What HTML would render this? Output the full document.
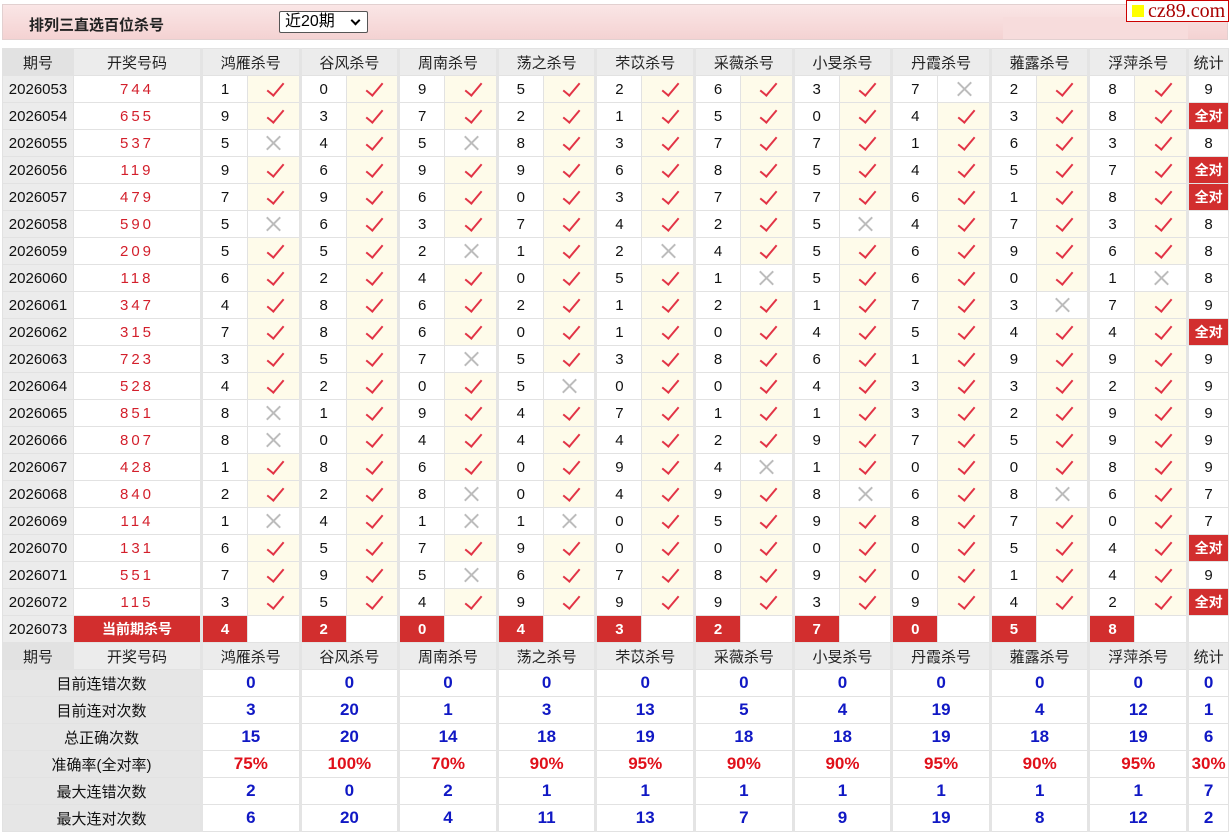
<!DOCTYPE html>
<html><head><meta charset="utf-8">
<style>
*{margin:0;padding:0;box-sizing:border-box}
body{width:1230px;height:832px;background:#fff;font-family:"Liberation Sans","Noto Sans CJK SC",sans-serif;position:relative;overflow:hidden}
.top{position:absolute;left:2px;top:4px;width:1226px;height:36px;background:linear-gradient(#fae6e6,#f4d2d2);border:1px solid #e2d0d0}
.title{position:absolute;left:26px;top:9px;font-size:15px;font-weight:bold;color:#222}
.sel{position:absolute;left:276px;top:6px;width:89px;height:22px;border:1px solid #555;border-radius:2px;background:#fff;font-size:16px;padding-left:5px;line-height:20px}
.sel i{position:absolute;right:8px;top:5px;width:7px;height:7px;border-right:2px solid #000;border-bottom:2px solid #000;transform:rotate(45deg)}
.inner{position:absolute;left:1000px;top:12px;width:185px;height:22px;background:#f7dcdc}
.logo{position:absolute;left:1126px;top:0;width:103px;height:22px;background:#fff;border:1px solid #c00;font-family:"Liberation Serif",serif;font-size:20px;color:#a00;line-height:20px;padding-left:21px}
.logo b{position:absolute;left:5px;top:4px;width:12px;height:12px;background:#ff0}
table{position:absolute;left:2px;top:48px;border-collapse:collapse;table-layout:fixed;width:1226px}
td{height:27px;border:1px solid #e2e2e2;text-align:center;font-size:15px;color:#111;padding:0;position:relative}
tr.h td{background:#ececec;color:#222}
tr.h td.q{background:#e2e2e2}
td.q{background:#ececec}
td.k{color:#d31f2b;letter-spacing:3px}
td.g{border-right:3px solid #e4e4e4}
td.y{background:#fefbea}
td.y:after{content:"";position:absolute;left:50%;top:50%;width:7px;height:15px;margin:-10px 0 0 -2px;border-right:2px solid #e23446;border-bottom:2px solid #e23446;transform:rotate(40deg)}
td.x:before,td.x:after{content:"";position:absolute;left:50%;top:50%;width:19px;height:2px;margin:-1px 0 0 -9px;background:#bcbcbc;transform:rotate(45deg)}
td.x:after{transform:rotate(-45deg)}
td.a{background:#d22e2e;color:#fff;font-weight:bold;font-size:14px}
td.c{background:#d22e2e;color:#fff;font-weight:bold;font-size:15px}
td.l{background:#e6e6e6}
td.b{color:#1018c4;font-weight:bold;font-size:17px}
td.r{color:#e0101a;font-weight:bold;font-size:17px}
</style></head><body>
<div class="top"><div class="title">排列三直选百位杀号</div><div class="sel">近20期<i></i></div><div class="inner"></div></div>
<div class="logo"><b></b>cz89.com</div>
<table>
<colgroup><col style="width:71px"><col style="width:128px"><col style="width:46px"><col style="width:52.6px"><col style="width:46px"><col style="width:52.6px"><col style="width:46px"><col style="width:52.6px"><col style="width:46px"><col style="width:52.6px"><col style="width:46px"><col style="width:52.6px"><col style="width:46px"><col style="width:52.6px"><col style="width:46px"><col style="width:52.6px"><col style="width:46px"><col style="width:52.6px"><col style="width:46px"><col style="width:52.6px"><col style="width:46px"><col style="width:52.6px"><col style="width:41px"></colgroup>
<tr class="h"><td class="q">期号</td><td class="g">开奖号码</td><td colspan="2" class="g">鸿雁杀号</td><td colspan="2" class="g">谷风杀号</td><td colspan="2" class="g">周南杀号</td><td colspan="2" class="g">荡之杀号</td><td colspan="2" class="g">芣苡杀号</td><td colspan="2" class="g">采薇杀号</td><td colspan="2" class="g">小旻杀号</td><td colspan="2" class="g">丹霞杀号</td><td colspan="2" class="g">蕥露杀号</td><td colspan="2" class="g">浮萍杀号</td><td>统计</td></tr>
<tr><td class="q">2026053</td><td class="k g">744</td><td>1</td><td class="y g"></td><td>0</td><td class="y g"></td><td>9</td><td class="y g"></td><td>5</td><td class="y g"></td><td>2</td><td class="y g"></td><td>6</td><td class="y g"></td><td>3</td><td class="y g"></td><td>7</td><td class="x g"></td><td>2</td><td class="y g"></td><td>8</td><td class="y g"></td><td>9</td></tr>
<tr><td class="q">2026054</td><td class="k g">655</td><td>9</td><td class="y g"></td><td>3</td><td class="y g"></td><td>7</td><td class="y g"></td><td>2</td><td class="y g"></td><td>1</td><td class="y g"></td><td>5</td><td class="y g"></td><td>0</td><td class="y g"></td><td>4</td><td class="y g"></td><td>3</td><td class="y g"></td><td>8</td><td class="y g"></td><td class="a">全对</td></tr>
<tr><td class="q">2026055</td><td class="k g">537</td><td>5</td><td class="x g"></td><td>4</td><td class="y g"></td><td>5</td><td class="x g"></td><td>8</td><td class="y g"></td><td>3</td><td class="y g"></td><td>7</td><td class="y g"></td><td>7</td><td class="y g"></td><td>1</td><td class="y g"></td><td>6</td><td class="y g"></td><td>3</td><td class="y g"></td><td>8</td></tr>
<tr><td class="q">2026056</td><td class="k g">119</td><td>9</td><td class="y g"></td><td>6</td><td class="y g"></td><td>9</td><td class="y g"></td><td>9</td><td class="y g"></td><td>6</td><td class="y g"></td><td>8</td><td class="y g"></td><td>5</td><td class="y g"></td><td>4</td><td class="y g"></td><td>5</td><td class="y g"></td><td>7</td><td class="y g"></td><td class="a">全对</td></tr>
<tr><td class="q">2026057</td><td class="k g">479</td><td>7</td><td class="y g"></td><td>9</td><td class="y g"></td><td>6</td><td class="y g"></td><td>0</td><td class="y g"></td><td>3</td><td class="y g"></td><td>7</td><td class="y g"></td><td>7</td><td class="y g"></td><td>6</td><td class="y g"></td><td>1</td><td class="y g"></td><td>8</td><td class="y g"></td><td class="a">全对</td></tr>
<tr><td class="q">2026058</td><td class="k g">590</td><td>5</td><td class="x g"></td><td>6</td><td class="y g"></td><td>3</td><td class="y g"></td><td>7</td><td class="y g"></td><td>4</td><td class="y g"></td><td>2</td><td class="y g"></td><td>5</td><td class="x g"></td><td>4</td><td class="y g"></td><td>7</td><td class="y g"></td><td>3</td><td class="y g"></td><td>8</td></tr>
<tr><td class="q">2026059</td><td class="k g">209</td><td>5</td><td class="y g"></td><td>5</td><td class="y g"></td><td>2</td><td class="x g"></td><td>1</td><td class="y g"></td><td>2</td><td class="x g"></td><td>4</td><td class="y g"></td><td>5</td><td class="y g"></td><td>6</td><td class="y g"></td><td>9</td><td class="y g"></td><td>6</td><td class="y g"></td><td>8</td></tr>
<tr><td class="q">2026060</td><td class="k g">118</td><td>6</td><td class="y g"></td><td>2</td><td class="y g"></td><td>4</td><td class="y g"></td><td>0</td><td class="y g"></td><td>5</td><td class="y g"></td><td>1</td><td class="x g"></td><td>5</td><td class="y g"></td><td>6</td><td class="y g"></td><td>0</td><td class="y g"></td><td>1</td><td class="x g"></td><td>8</td></tr>
<tr><td class="q">2026061</td><td class="k g">347</td><td>4</td><td class="y g"></td><td>8</td><td class="y g"></td><td>6</td><td class="y g"></td><td>2</td><td class="y g"></td><td>1</td><td class="y g"></td><td>2</td><td class="y g"></td><td>1</td><td class="y g"></td><td>7</td><td class="y g"></td><td>3</td><td class="x g"></td><td>7</td><td class="y g"></td><td>9</td></tr>
<tr><td class="q">2026062</td><td class="k g">315</td><td>7</td><td class="y g"></td><td>8</td><td class="y g"></td><td>6</td><td class="y g"></td><td>0</td><td class="y g"></td><td>1</td><td class="y g"></td><td>0</td><td class="y g"></td><td>4</td><td class="y g"></td><td>5</td><td class="y g"></td><td>4</td><td class="y g"></td><td>4</td><td class="y g"></td><td class="a">全对</td></tr>
<tr><td class="q">2026063</td><td class="k g">723</td><td>3</td><td class="y g"></td><td>5</td><td class="y g"></td><td>7</td><td class="x g"></td><td>5</td><td class="y g"></td><td>3</td><td class="y g"></td><td>8</td><td class="y g"></td><td>6</td><td class="y g"></td><td>1</td><td class="y g"></td><td>9</td><td class="y g"></td><td>9</td><td class="y g"></td><td>9</td></tr>
<tr><td class="q">2026064</td><td class="k g">528</td><td>4</td><td class="y g"></td><td>2</td><td class="y g"></td><td>0</td><td class="y g"></td><td>5</td><td class="x g"></td><td>0</td><td class="y g"></td><td>0</td><td class="y g"></td><td>4</td><td class="y g"></td><td>3</td><td class="y g"></td><td>3</td><td class="y g"></td><td>2</td><td class="y g"></td><td>9</td></tr>
<tr><td class="q">2026065</td><td class="k g">851</td><td>8</td><td class="x g"></td><td>1</td><td class="y g"></td><td>9</td><td class="y g"></td><td>4</td><td class="y g"></td><td>7</td><td class="y g"></td><td>1</td><td class="y g"></td><td>1</td><td class="y g"></td><td>3</td><td class="y g"></td><td>2</td><td class="y g"></td><td>9</td><td class="y g"></td><td>9</td></tr>
<tr><td class="q">2026066</td><td class="k g">807</td><td>8</td><td class="x g"></td><td>0</td><td class="y g"></td><td>4</td><td class="y g"></td><td>4</td><td class="y g"></td><td>4</td><td class="y g"></td><td>2</td><td class="y g"></td><td>9</td><td class="y g"></td><td>7</td><td class="y g"></td><td>5</td><td class="y g"></td><td>9</td><td class="y g"></td><td>9</td></tr>
<tr><td class="q">2026067</td><td class="k g">428</td><td>1</td><td class="y g"></td><td>8</td><td class="y g"></td><td>6</td><td class="y g"></td><td>0</td><td class="y g"></td><td>9</td><td class="y g"></td><td>4</td><td class="x g"></td><td>1</td><td class="y g"></td><td>0</td><td class="y g"></td><td>0</td><td class="y g"></td><td>8</td><td class="y g"></td><td>9</td></tr>
<tr><td class="q">2026068</td><td class="k g">840</td><td>2</td><td class="y g"></td><td>2</td><td class="y g"></td><td>8</td><td class="x g"></td><td>0</td><td class="y g"></td><td>4</td><td class="y g"></td><td>9</td><td class="y g"></td><td>8</td><td class="x g"></td><td>6</td><td class="y g"></td><td>8</td><td class="x g"></td><td>6</td><td class="y g"></td><td>7</td></tr>
<tr><td class="q">2026069</td><td class="k g">114</td><td>1</td><td class="x g"></td><td>4</td><td class="y g"></td><td>1</td><td class="x g"></td><td>1</td><td class="x g"></td><td>0</td><td class="y g"></td><td>5</td><td class="y g"></td><td>9</td><td class="y g"></td><td>8</td><td class="y g"></td><td>7</td><td class="y g"></td><td>0</td><td class="y g"></td><td>7</td></tr>
<tr><td class="q">2026070</td><td class="k g">131</td><td>6</td><td class="y g"></td><td>5</td><td class="y g"></td><td>7</td><td class="y g"></td><td>9</td><td class="y g"></td><td>0</td><td class="y g"></td><td>0</td><td class="y g"></td><td>0</td><td class="y g"></td><td>0</td><td class="y g"></td><td>5</td><td class="y g"></td><td>4</td><td class="y g"></td><td class="a">全对</td></tr>
<tr><td class="q">2026071</td><td class="k g">551</td><td>7</td><td class="y g"></td><td>9</td><td class="y g"></td><td>5</td><td class="x g"></td><td>6</td><td class="y g"></td><td>7</td><td class="y g"></td><td>8</td><td class="y g"></td><td>9</td><td class="y g"></td><td>0</td><td class="y g"></td><td>1</td><td class="y g"></td><td>4</td><td class="y g"></td><td>9</td></tr>
<tr><td class="q">2026072</td><td class="k g">115</td><td>3</td><td class="y g"></td><td>5</td><td class="y g"></td><td>4</td><td class="y g"></td><td>9</td><td class="y g"></td><td>9</td><td class="y g"></td><td>9</td><td class="y g"></td><td>3</td><td class="y g"></td><td>9</td><td class="y g"></td><td>4</td><td class="y g"></td><td>2</td><td class="y g"></td><td class="a">全对</td></tr>
<tr><td class="q">2026073</td><td class="a g">当前期杀号</td><td class="c">4</td><td class="g"></td><td class="c">2</td><td class="g"></td><td class="c">0</td><td class="g"></td><td class="c">4</td><td class="g"></td><td class="c">3</td><td class="g"></td><td class="c">2</td><td class="g"></td><td class="c">7</td><td class="g"></td><td class="c">0</td><td class="g"></td><td class="c">5</td><td class="g"></td><td class="c">8</td><td class="g"></td><td></td></tr>
<tr class="h"><td class="q">期号</td><td class="g">开奖号码</td><td colspan="2" class="g">鸿雁杀号</td><td colspan="2" class="g">谷风杀号</td><td colspan="2" class="g">周南杀号</td><td colspan="2" class="g">荡之杀号</td><td colspan="2" class="g">芣苡杀号</td><td colspan="2" class="g">采薇杀号</td><td colspan="2" class="g">小旻杀号</td><td colspan="2" class="g">丹霞杀号</td><td colspan="2" class="g">蕥露杀号</td><td colspan="2" class="g">浮萍杀号</td><td>统计</td></tr>
<tr><td colspan="2" class="l g">目前连错次数</td><td colspan="2" class="b g">0</td><td colspan="2" class="b g">0</td><td colspan="2" class="b g">0</td><td colspan="2" class="b g">0</td><td colspan="2" class="b g">0</td><td colspan="2" class="b g">0</td><td colspan="2" class="b g">0</td><td colspan="2" class="b g">0</td><td colspan="2" class="b g">0</td><td colspan="2" class="b g">0</td><td class="b">0</td></tr>
<tr><td colspan="2" class="l g">目前连对次数</td><td colspan="2" class="b g">3</td><td colspan="2" class="b g">20</td><td colspan="2" class="b g">1</td><td colspan="2" class="b g">3</td><td colspan="2" class="b g">13</td><td colspan="2" class="b g">5</td><td colspan="2" class="b g">4</td><td colspan="2" class="b g">19</td><td colspan="2" class="b g">4</td><td colspan="2" class="b g">12</td><td class="b">1</td></tr>
<tr><td colspan="2" class="l g">总正确次数</td><td colspan="2" class="b g">15</td><td colspan="2" class="b g">20</td><td colspan="2" class="b g">14</td><td colspan="2" class="b g">18</td><td colspan="2" class="b g">19</td><td colspan="2" class="b g">18</td><td colspan="2" class="b g">18</td><td colspan="2" class="b g">19</td><td colspan="2" class="b g">18</td><td colspan="2" class="b g">19</td><td class="b">6</td></tr>
<tr><td colspan="2" class="l g">准确率(全对率)</td><td colspan="2" class="r g">75%</td><td colspan="2" class="r g">100%</td><td colspan="2" class="r g">70%</td><td colspan="2" class="r g">90%</td><td colspan="2" class="r g">95%</td><td colspan="2" class="r g">90%</td><td colspan="2" class="r g">90%</td><td colspan="2" class="r g">95%</td><td colspan="2" class="r g">90%</td><td colspan="2" class="r g">95%</td><td class="r">30%</td></tr>
<tr><td colspan="2" class="l g">最大连错次数</td><td colspan="2" class="b g">2</td><td colspan="2" class="b g">0</td><td colspan="2" class="b g">2</td><td colspan="2" class="b g">1</td><td colspan="2" class="b g">1</td><td colspan="2" class="b g">1</td><td colspan="2" class="b g">1</td><td colspan="2" class="b g">1</td><td colspan="2" class="b g">1</td><td colspan="2" class="b g">1</td><td class="b">7</td></tr>
<tr><td colspan="2" class="l g">最大连对次数</td><td colspan="2" class="b g">6</td><td colspan="2" class="b g">20</td><td colspan="2" class="b g">4</td><td colspan="2" class="b g">11</td><td colspan="2" class="b g">13</td><td colspan="2" class="b g">7</td><td colspan="2" class="b g">9</td><td colspan="2" class="b g">19</td><td colspan="2" class="b g">8</td><td colspan="2" class="b g">12</td><td class="b">2</td></tr>
</table>
</body></html>
